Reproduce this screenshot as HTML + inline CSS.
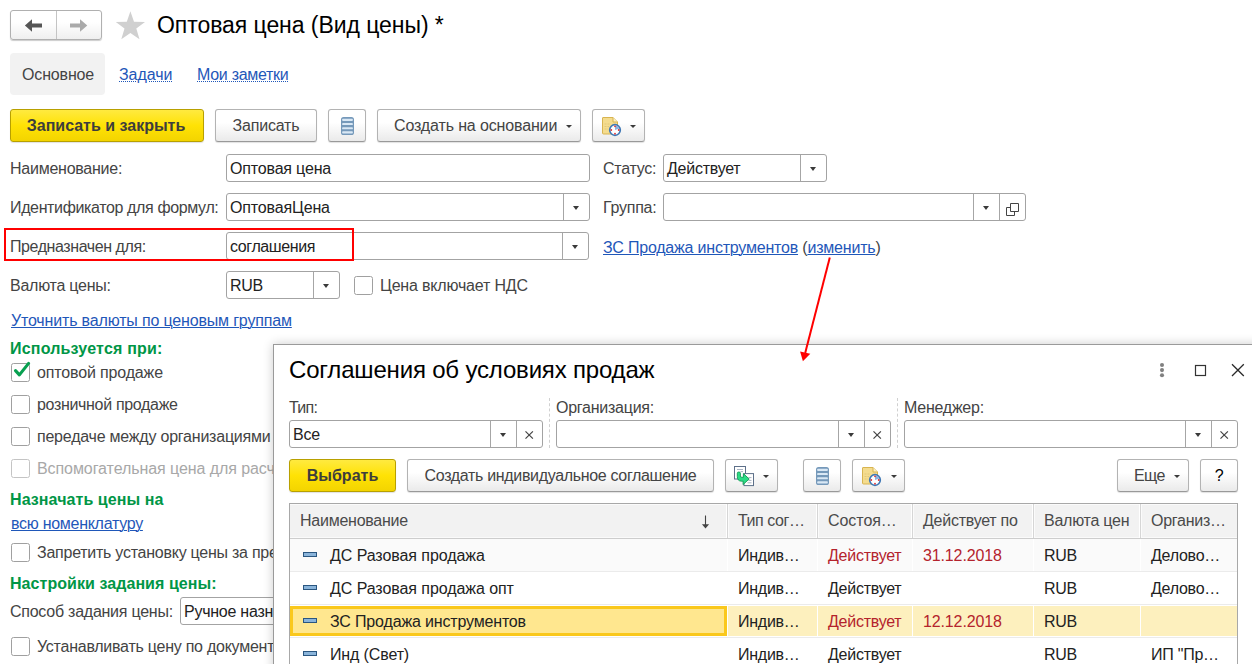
<!DOCTYPE html>
<html lang="ru">
<head>
<meta charset="utf-8">
<title>Оптовая цена (Вид цены)</title>
<style>
*{box-sizing:border-box;margin:0;padding:0}
html,body{width:1252px;height:664px;overflow:hidden;background:#fff}
body{position:relative;font-family:"Liberation Sans",sans-serif;font-size:16px;color:#333;line-height:18px}
.a{position:absolute;white-space:nowrap}
.t{position:absolute;white-space:nowrap;height:18px;line-height:18px;letter-spacing:-0.25px;color:#444}
.lnk{color:#1f57b9;text-decoration:underline;text-underline-offset:1px;text-decoration-thickness:1px}
.dlnk{color:#1f57b9;text-decoration:underline dotted;text-underline-offset:1px;text-decoration-thickness:1px}
.grn{color:#009646;font-weight:bold}
.btn{position:absolute;height:33px;letter-spacing:-0.2px;border:1px solid #b3b3b3;border-radius:3px;background:linear-gradient(#fff 40%,#eaeaea);border-bottom-color:#999;box-shadow:0 1px 1px rgba(0,0,0,.12);text-align:center;line-height:31px;white-space:nowrap;color:#444}
.ybtn{letter-spacing:0;border-color:#b8a000;background:linear-gradient(#ffea40,#ffe205 50%,#f3d400);font-weight:bold;color:#3d3d3d}
.inp{position:absolute;height:28px;border:1px solid #a3a3a3;border-radius:3px;background:#fff;line-height:28px;letter-spacing:-0.25px;padding-left:3px;white-space:nowrap;overflow:hidden;color:#222}
.dv{position:absolute;top:0;bottom:0;width:1px;background:#a6a6a6}
.tri{position:absolute;width:0;height:0;border-left:3.5px solid transparent;border-right:3.5px solid transparent;border-top:4.2px solid #3a3a3a}
.btn .tri{margin-left:0.5px;border-left-width:3px;border-right-width:3px;border-top-width:3px}
.cb{position:absolute;width:19px;height:19px;border:1px solid #a0a0a0;border-radius:2.5px;background:#fff}
.dis{color:#a8a8a8}
.th{color:#4a4a4a}
.td{color:#222}
.red{color:#b4232d}
</style>
</head>
<body>

<!-- ===== header: nav buttons, star, title ===== -->
<div class="a" id="nav" style="left:10px;top:10px;width:92px;height:30px;border:1px solid #b0b0b0;border-radius:3px;background:linear-gradient(#fff 40%,#efefef);box-shadow:0 1px 1px rgba(0,0,0,.2)">
  <div class="dv" style="left:45px;background:#c4c4c4"></div>
  <svg class="a" style="left:-1px;top:-1px" width="92" height="30" viewBox="0 0 92 30">
    <path d="M14.9 15.4 L22 9.2 L22 13.4 L32 13.4 L32 17.4 L22 17.4 L22 21.7 Z" fill="#555"/>
    <path d="M77.3 15.4 L70 9.2 L70 13.4 L60 13.4 L60 17.4 L70 17.4 L70 21.7 Z" fill="#aaa"/>
  </svg>
</div>
<svg class="a" style="left:116px;top:10px;overflow:visible" width="30" height="30" viewBox="0 0 30 30">
  <path d="M14.4 1.3 L18.0 11.7 L29.0 11.9 L20.3 18.6 L23.5 29.2 L14.4 22.9 L5.3 29.2 L8.5 18.6 L-0.2 11.9 L10.8 11.7 Z" fill="#d0d0d0"/>
</svg>
<div class="a" id="title" style="left:157px;top:11px;font-size:23px;letter-spacing:-0.06px;line-height:28px;color:#000">Оптовая цена (Вид цены) *</div>

<!-- ===== tabs ===== -->
<div class="a" style="left:10px;top:53px;width:95px;height:42px;background:#f2f2f2;border-radius:4px"></div>
<div class="t" style="letter-spacing:-0.15px;left:22px;top:66px">Основное</div>
<div class="t dlnk" style="letter-spacing:-0.04px;left:119px;top:66px">Задачи</div>
<div class="t dlnk" style="letter-spacing:-0.29px;left:197px;top:66px">Мои заметки</div>

<!-- ===== command bar ===== -->
<div class="btn ybtn" style="left:10px;top:109px;width:194px;padding-right:2px">Записать и закрыть</div>
<div class="btn" style="left:215px;top:109px;width:102px">Записать</div>
<div class="btn" style="left:328px;top:109px;width:38px"></div>
<div class="btn" style="letter-spacing:-0.14px;left:377px;top:109px;width:204px;text-align:left;padding-left:16px">Создать на основании<span class="tri" style="left:187px;top:15px"></span></div>
<div class="btn" style="left:592px;top:109px;width:53px"><span class="tri" style="left:36px;top:15px"></span></div>


<svg width="0" height="0" style="position:absolute">
 <defs>
  <linearGradient id="gl" x1="0" y1="0" x2="0" y2="1"><stop offset="0" stop-color="#e3edf6"/><stop offset="1" stop-color="#b4cce1"/></linearGradient>
  <g id="ilist">
   <rect x="0" y="0" width="13" height="18" rx="2.6" fill="#7599ba"/>
   <rect x="1.1" y="1.8" width="10.8" height="2.1" rx="0.9" fill="#d9e8f5"/>
   <rect x="1.1" y="6" width="10.8" height="2.1" rx="0.9" fill="#d9e8f5"/>
   <rect x="1.1" y="10.2" width="10.8" height="2.1" rx="0.9" fill="#d9e8f5"/>
   <rect x="1.1" y="14.3" width="10.8" height="2.1" rx="0.9" fill="#d9e8f5"/>
  </g>
  <g id="idoc">
   <path d="M1 0.5 H11 L15.5 5 V16 Q15.5 17 14.5 17 H1.5 Q0.5 17 0.5 16 V1 Q0.5 0.5 1 0.5 Z" fill="#f4dc8e" stroke="#d8b450"/>
   <path d="M11 0.5 V5 H15.5" fill="#fbefc4" stroke="#d8b450"/>
   <path d="M2.5 7 H8 M2.5 9.5 H7 M2.5 12 H6" stroke="#e2c878" stroke-width="1" stroke-dasharray="2 1"/>
   <circle cx="13" cy="13" r="5.3" fill="#fff" stroke="#3f78b5" stroke-width="1.7"/>
   <path d="M13 13 V8.4 A4.6 4.6 0 0 1 17.4 11.6 Z" fill="#8fb0dc"/>
   <circle cx="13" cy="9.3" r="0.9" fill="#e03030"/><circle cx="13" cy="16.7" r="0.9" fill="#e03030"/><circle cx="9.3" cy="13" r="0.9" fill="#e03030"/><circle cx="16.7" cy="13" r="0.9" fill="#e03030"/>
  </g>
  <g id="icopy">
   <rect x="1.5" y="1.5" width="11" height="12.5" fill="#fff" stroke="#5d7089"/>
   <path d="M4 4.5 H10 M7.5 6.6 H10" stroke="#a9b4c3" stroke-width="1"/>
   <rect x="11" y="8.6" width="9.5" height="12" fill="#fff" stroke="#5d7089"/>
   <path d="M15.5 12.6 H18.5 M15.5 15.4 H18.5 M14.5 17.8 H18.5" stroke="#a9b4c3" stroke-width="1"/>
   <path d="M4.3 8.2 Q4.3 7 5.8 7 Q7.4 7 7.4 8.2 L7.4 11 Q7.4 12.3 8.8 12.3 L10.3 12.3 L10.4 8.6 L16.2 14 L10 19.6 L10.2 16.2 L8.4 16.2 Q4.3 16 4.3 11.5 Z" fill="#2bdc85" stroke="#129a55" stroke-width="0.9" stroke-linejoin="round"/>
  </g>
 </defs>
</svg>
<svg class="a" style="left:341px;top:117px" width="13" height="18"><use href="#ilist"/></svg>
<svg class="a" style="left:602px;top:117px;overflow:visible" width="19" height="19"><use href="#idoc"/></svg>

<!-- ===== fields ===== -->
<div class="t" style="left:10px;top:160px">Наименование:</div>
<div class="inp" style="letter-spacing:-0.17px;left:226px;top:154px;width:364px">Оптовая цена</div>
<div class="t" style="left:603px;top:160px">Статус:</div>
<div class="inp" style="left:663px;top:154px;width:164px">Действует<div class="dv" style="left:136px"></div><span class="tri" style="left:146px;top:12px"></span></div>

<div class="t" style="letter-spacing:-0.365px;left:10px;top:199px">Идентификатор для формул:</div>
<div class="inp" style="letter-spacing:-0.15px;left:226px;top:193px;width:364px">ОптоваяЦена<div class="dv" style="left:336px"></div><span class="tri" style="left:346px;top:12px"></span></div>
<div class="t" style="left:603px;top:199px">Группа:</div>
<div class="inp" style="left:663px;top:193px;width:363px"><div class="dv" style="left:309px"></div><span class="tri" style="left:319px;top:12px"></span><div class="dv" style="left:335px"></div><svg class="a" style="left:342px;top:9px" width="13" height="13" viewBox="0 0 13 13"><path d="M4.5 0.5 H12.5 V8.5 H4.5 Z M4.5 4.5 H0.5 V12.5 H8.5 V8.5" fill="none" stroke="#444" stroke-width="1"/></svg></div>

<div class="t" style="letter-spacing:-0.42px;left:10px;top:238px">Предназначен для:</div>
<div class="inp" style="letter-spacing:-0.39px;left:226px;top:232px;width:363px">соглашения<div class="dv" style="left:335px"></div><span class="tri" style="left:345px;top:12px"></span></div>
<div class="a" style="left:4px;top:228px;width:350px;height:33px;border:2px solid #ff0000"></div>
<div class="t" style="letter-spacing:-0.2px;left:603px;top:239px"><span class="lnk">ЗС Продажа инструментов</span> (<span class="lnk">изменить</span>)</div>

<div class="t" style="left:10px;top:277px">Валюта цены:</div>
<div class="inp" style="left:226px;top:271px;width:114px">RUB<div class="dv" style="left:86px"></div><span class="tri" style="left:96px;top:12px"></span></div>
<div class="cb" style="left:354px;top:276px"></div>
<div class="t" style="letter-spacing:-0.18px;left:380px;top:277px">Цена включает НДС</div>

<div class="t lnk" style="letter-spacing:-0.165px;left:11px;top:312px">Уточнить валюты по ценовым группам</div>

<div class="t grn" style="letter-spacing:0.19px;left:10px;top:340px">Используется при:</div>
<div class="cb" style="left:11px;top:363px"></div>
<svg class="a" style="left:11px;top:360px" width="22" height="22" viewBox="0 0 22 22"><path d="M4.5 10.6 L8.4 14.9 L17.6 3.4" fill="none" stroke="#08a050" stroke-width="3.1" stroke-linecap="round" stroke-linejoin="round"/></svg>
<div class="t" style="letter-spacing:-0.15px;left:37px;top:364px">оптовой продаже</div>
<div class="cb" style="left:11px;top:395px"></div>
<div class="t" style="letter-spacing:-0.325px;left:37px;top:396px">розничной продаже</div>
<div class="cb" style="left:11px;top:427px"></div>
<div class="t" style="letter-spacing:-0.22px;left:37px;top:428px">передаче между организациями</div>
<div class="cb" style="left:11px;top:459px;border-color:#c4c4c4"></div>
<div class="t dis" style="letter-spacing:-0.075px;left:37px;top:460px">Вспомогательная цена для расчета других цен</div>

<div class="t grn" style="letter-spacing:0.075px;left:10px;top:491px">Назначать цены на</div>
<div class="t lnk" style="letter-spacing:-0.28px;left:11px;top:515px">всю номенклатуру</div>
<div class="cb" style="left:11px;top:543px"></div>
<div class="t" style="left:37px;top:544px">Запретить установку цены за пределами</div>
<div class="t grn" style="letter-spacing:0.06px;left:10px;top:575px">Настройки задания цены:</div>
<div class="t" style="left:10px;top:603px">Способ задания цены:</div>
<div class="inp" style="left:180px;top:597px;width:300px">Ручное назначение</div>
<div class="cb" style="left:11px;top:637px"></div>
<div class="t" style="left:37px;top:638px">Устанавливать цену по документам</div>

<!-- ===== dialog ===== -->
<div class="a" id="dlg" style="left:273px;top:344px;width:1000px;height:340px;background:#fff;border:1px solid #9a9a9a;box-shadow:0 0 10px rgba(0,0,0,.2)"></div>
<div class="a" id="dtitle" style="letter-spacing:-0.18px;left:289px;top:356px;font-size:24px;line-height:28px;color:#000">Соглашения об условиях продаж</div>

<!-- dialog window controls -->
<svg class="a" style="left:1150px;top:358px" width="100" height="26" viewBox="0 0 100 26">
  <circle cx="12" cy="7" r="2.05" fill="#808080"/><circle cx="12" cy="12.1" r="2.05" fill="#808080"/><circle cx="12" cy="17.2" r="2.05" fill="#808080"/>
  <rect x="45.5" y="7.5" width="10" height="10" fill="none" stroke="#333" stroke-width="1.2"/>
  <path d="M82 6.3 L93.8 18 M93.8 6.3 L82 18" stroke="#2a2a2a" stroke-width="1.3" fill="none"/>
</svg>

<!-- dialog filters -->
<div class="t" style="letter-spacing:-0.7px;left:289px;top:399px">Тип:</div>
<div class="t" style="left:556px;top:399px">Организация:</div>
<div class="t" style="left:904px;top:399px">Менеджер:</div>
<div class="a" style="left:549px;top:398px;width:0;height:50px;border-left:1px dashed #d0d0d0"></div>
<div class="a" style="left:897px;top:398px;width:0;height:50px;border-left:1px dashed #d0d0d0"></div>

<div class="inp" style="left:289px;top:420px;width:254px">Все<div class="dv" style="left:200px"></div><span class="tri" style="left:210px;top:12px"></span><div class="dv" style="left:226px"></div><svg class="a" style="left:234px;top:8px" width="11" height="11" viewBox="0 0 11 11"><path d="M1.5 2.3 L8.9 9.7 M8.9 2.3 L1.5 9.7" stroke="#444" stroke-width="1.2" fill="none"/></svg></div>
<div class="inp" style="left:556px;top:420px;width:335px"><div class="dv" style="left:281px"></div><span class="tri" style="left:291px;top:12px"></span><div class="dv" style="left:307px"></div><svg class="a" style="left:315px;top:8px" width="11" height="11" viewBox="0 0 11 11"><path d="M1.5 2.3 L8.9 9.7 M8.9 2.3 L1.5 9.7" stroke="#444" stroke-width="1.2" fill="none"/></svg></div>
<div class="inp" style="left:904px;top:420px;width:334px"><div class="dv" style="left:280px"></div><span class="tri" style="left:290px;top:12px"></span><div class="dv" style="left:306px"></div><svg class="a" style="left:314px;top:8px" width="11" height="11" viewBox="0 0 11 11"><path d="M1.5 2.3 L8.9 9.7 M8.9 2.3 L1.5 9.7" stroke="#444" stroke-width="1.2" fill="none"/></svg></div>

<!-- dialog command bar -->
<div class="btn ybtn" style="left:289px;top:459px;width:107px">Выбрать</div>
<div class="btn" style="letter-spacing:-0.333px;left:407px;top:459px;width:307px">Создать индивидуальное соглашение</div>
<div class="btn" style="left:725px;top:459px;width:53px"><span class="tri" style="left:36px;top:15px"></span></div>
<svg class="a" style="left:733px;top:465px" width="22" height="22"><use href="#icopy"/></svg>
<div class="btn" style="left:803px;top:459px;width:38px"></div>
<svg class="a" style="left:816px;top:467px" width="13" height="18"><use href="#ilist"/></svg>
<div class="btn" style="left:852px;top:459px;width:53px"><span class="tri" style="left:37px;top:15px"></span></div>
<svg class="a" style="left:862px;top:467px;overflow:visible" width="19" height="19"><use href="#idoc"/></svg>
<div class="btn" style="letter-spacing:-0.55px;left:1117px;top:459px;width:72px;text-align:left;padding-left:16px">Еще<span class="tri" style="left:55px;top:15px"></span></div>
<div class="btn" style="left:1200px;top:459px;width:38px;color:#000">?</div>

<!-- dialog table -->
<div class="a" id="tbl" style="left:289px;top:503px;width:949px;height:170px;border:1px solid #a8a8a8;background:#fff"></div>
<div class="a" style="left:290px;top:504px;width:947px;height:35px;background:#f2f2f2;border-top:1px solid #fbfbfb;border-bottom:1px solid #cdcdcd;box-shadow:inset 0 -1px 0 #fafafa"></div>
<div class="t th" style="left:300px;top:512px">Наименование</div>
<div class="t th" style="letter-spacing:-0.45px;left:738px;top:512px">Тип сог…</div>
<div class="a" style="left:727px;top:504px;width:1px;height:34px;background:#d6d6d6"></div>
<div class="a" style="left:728px;top:504px;width:1px;height:34px;background:#fbfbfb"></div>
<div class="a" style="left:726px;top:504px;width:1px;height:34px;background:#fff"></div>
<div class="t th" style="letter-spacing:-0.05px;left:828px;top:512px">Состоя…</div>
<div class="a" style="left:817px;top:504px;width:1px;height:34px;background:#d6d6d6"></div>
<div class="a" style="left:818px;top:504px;width:1px;height:34px;background:#fbfbfb"></div>
<div class="a" style="left:816px;top:504px;width:1px;height:34px;background:#fff"></div>
<div class="t th" style="left:923px;top:512px">Действует по</div>
<div class="a" style="left:912px;top:504px;width:1px;height:34px;background:#d6d6d6"></div>
<div class="a" style="left:913px;top:504px;width:1px;height:34px;background:#fbfbfb"></div>
<div class="a" style="left:911px;top:504px;width:1px;height:34px;background:#fff"></div>
<div class="t th" style="left:1044px;top:512px">Валюта цен</div>
<div class="a" style="left:1033px;top:504px;width:1px;height:34px;background:#d6d6d6"></div>
<div class="a" style="left:1034px;top:504px;width:1px;height:34px;background:#fbfbfb"></div>
<div class="a" style="left:1032px;top:504px;width:1px;height:34px;background:#fff"></div>
<div class="t th" style="left:1151px;top:512px">Организ…</div>
<div class="a" style="left:1140px;top:504px;width:1px;height:34px;background:#d6d6d6"></div>
<div class="a" style="left:1141px;top:504px;width:1px;height:34px;background:#fbfbfb"></div>
<div class="a" style="left:1139px;top:504px;width:1px;height:34px;background:#fff"></div>
<svg class="a" style="left:700px;top:514px" width="12" height="16" viewBox="0 0 12 16"><path d="M5.5 1.5 V11" fill="none" stroke="#444" stroke-width="1.1"/><path d="M1.9 10.3 H9.1 L5.5 14.6 Z" fill="#444"/></svg>
<div class="a" style="left:290px;top:539px;width:947px;height:32px;background:#fafafa"></div>
<div class="a" style="left:290px;top:571px;width:947px;height:1px;background:#ebebeb"></div>
<div class="a" style="left:303px;top:552px;width:14px;height:5px;background:#8ab4da;border:1px solid #2a5680"></div>
<div class="t td" style="letter-spacing:-0.07px;left:330px;top:547px">ДС Разовая продажа</div>
<div class="t td" style="left:738px;top:547px">Индив…</div>
<div class="t td red" style="left:828px;top:547px">Действует</div>
<div class="t td red" style="letter-spacing:-0.13px;left:923px;top:547px">31.12.2018</div>
<div class="t td" style="left:1044px;top:547px">RUB</div>
<div class="t td" style="left:1151px;top:547px">Делово…</div>
<div class="a" style="left:727px;top:539px;width:1px;height:32px;background:#fff"></div>
<div class="a" style="left:817px;top:539px;width:1px;height:32px;background:#fff"></div>
<div class="a" style="left:912px;top:539px;width:1px;height:32px;background:#fff"></div>
<div class="a" style="left:1033px;top:539px;width:1px;height:32px;background:#fff"></div>
<div class="a" style="left:1140px;top:539px;width:1px;height:32px;background:#fff"></div>
<div class="a" style="left:290px;top:604px;width:947px;height:1px;background:#ebebeb"></div>
<div class="a" style="left:303px;top:585px;width:14px;height:5px;background:#8ab4da;border:1px solid #2a5680"></div>
<div class="t td" style="letter-spacing:-0.07px;left:330px;top:580px">ДС Разовая продажа опт</div>
<div class="t td" style="left:738px;top:580px">Индив…</div>
<div class="t td" style="left:828px;top:580px">Действует</div>
<div class="t td" style="left:1044px;top:580px">RUB</div>
<div class="t td" style="left:1151px;top:580px">Делово…</div>
<div class="a" style="left:727px;top:572px;width:1px;height:32px;background:#fff"></div>
<div class="a" style="left:817px;top:572px;width:1px;height:32px;background:#fff"></div>
<div class="a" style="left:912px;top:572px;width:1px;height:32px;background:#fff"></div>
<div class="a" style="left:1033px;top:572px;width:1px;height:32px;background:#fff"></div>
<div class="a" style="left:1140px;top:572px;width:1px;height:32px;background:#fff"></div>
<div class="a" style="left:290px;top:606px;width:947px;height:30px;background:#fdf0be"></div>
<div class="a" style="left:290px;top:606px;width:437px;height:30px;background:#ffe78f;border:3px solid #fac81c"></div>
<div class="a" style="left:290px;top:637px;width:947px;height:1px;background:#ebebeb"></div>
<div class="a" style="left:303px;top:618px;width:14px;height:5px;background:#8ab4da;border:1px solid #2a5680"></div>
<div class="t td" style="letter-spacing:-0.16px;left:330px;top:613px">ЗС Продажа инструментов</div>
<div class="t td" style="left:738px;top:613px">Индив…</div>
<div class="t td red" style="left:828px;top:613px">Действует</div>
<div class="t td red" style="letter-spacing:-0.13px;left:923px;top:613px">12.12.2018</div>
<div class="t td" style="left:1044px;top:613px">RUB</div>
<div class="a" style="left:727px;top:606px;width:1px;height:30px;background:#fff"></div>
<div class="a" style="left:817px;top:606px;width:1px;height:30px;background:#fff"></div>
<div class="a" style="left:912px;top:606px;width:1px;height:30px;background:#fff"></div>
<div class="a" style="left:1033px;top:606px;width:1px;height:30px;background:#fff"></div>
<div class="a" style="left:1140px;top:606px;width:1px;height:30px;background:#fff"></div>
<div class="a" style="left:290px;top:670px;width:947px;height:1px;background:#ebebeb"></div>
<div class="a" style="left:303px;top:651px;width:14px;height:5px;background:#8ab4da;border:1px solid #2a5680"></div>
<div class="t td" style="letter-spacing:-0.13px;left:330px;top:646px">Инд (Свет)</div>
<div class="t td" style="left:738px;top:646px">Индив…</div>
<div class="t td" style="left:828px;top:646px">Действует</div>
<div class="t td" style="left:1044px;top:646px">RUB</div>
<div class="t td" style="left:1151px;top:646px">ИП "Пр…</div>
<div class="a" style="left:727px;top:638px;width:1px;height:32px;background:#fff"></div>
<div class="a" style="left:817px;top:638px;width:1px;height:32px;background:#fff"></div>
<div class="a" style="left:912px;top:638px;width:1px;height:32px;background:#fff"></div>
<div class="a" style="left:1033px;top:638px;width:1px;height:32px;background:#fff"></div>
<div class="a" style="left:1140px;top:638px;width:1px;height:32px;background:#fff"></div>

<!-- ===== red arrow ===== -->
<svg class="a" style="left:780px;top:250px" width="70" height="120" viewBox="0 0 70 120">
  <line x1="49.8" y1="7.6" x2="25.2" y2="103" stroke="#ff0000" stroke-width="2"/>
  <path d="M22.9 111.2 L20.1 101.5 L30.3 103.8 Z" fill="#ff0000"/>
</svg>
</body>
</html>
